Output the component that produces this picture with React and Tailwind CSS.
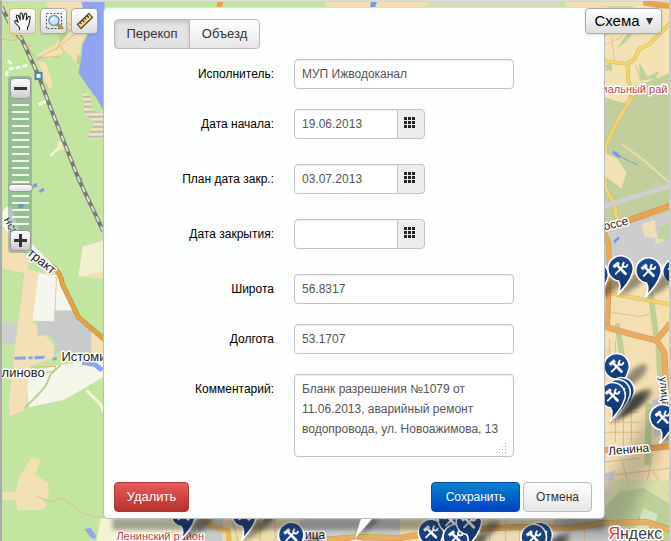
import React from "react";

const PINS = [
  [596, 274],
  [676, 271],
  [621, 268],
  [649, 270],
  [617, 366],
  [622, 390],
  [618, 392],
  [613, 395],
  [663, 417],
  [263, 496],
  [183, 514],
  [244, 514],
  [291, 535],
  [356, 553],
  [431, 532],
  [451, 520],
  [456, 537],
  [469, 522],
  [540, 535],
  [534, 537],
];

const TICKS = Array.from({ length: 18 }, (_, i) => i);

function Pin({ x, y }) {
  return (
    <g transform={`translate(${x} ${y}) scale(1.060)`}>
      <path d="M-2 26 L10 8 Q20 -2 27 -2 Q32 2 22 12 Q10 22 -2 26Z" fill="#222" opacity=".45" filter="url(#soft)" />
      <path
        d="M-3 25C0 20 0 15 -2 11.800A12 12 0 1 1 11 5C9 12 3 19 -3 25Z"
        fill="url(#pinFill)"
        stroke="#fff"
        strokeWidth="1.500"
      />
      <g stroke="#fff" fill="none">
        <path d="M-4.500 5L3 -2.500" strokeWidth="1.700" strokeLinecap="round" />
        <path d="M4.800 5L-2.500 -2.500" strokeWidth="2.600" strokeLinecap="round" />
        <path d="M-6.500 -1.500L-1.500 -5.500" strokeWidth="3" />
        <path d="M3.500 -6Q0.500 -2 3.500 -1.500Q6.500 -1 6.500 -4" strokeWidth="1.800" />
      </g>
    </g>
  );
}

function Road({ d, w = 3, color = "#f3d66b", edge = "#d9b465" }) {
  return (
    <g fill="none" strokeLinejoin="round">
      <path d={d} stroke={edge} strokeWidth={w + 1} />
      <path d={d} stroke={color} strokeWidth={w} />
    </g>
  );
}

function MapCanvas() {
  const halo = { paintOrder: "stroke", stroke: "#fff", strokeWidth: 3, strokeLinejoin: "round" };
  return (
    <svg
      className="absolute inset-0 h-full w-full"
      viewBox="0 0 671 541"
      preserveAspectRatio="xMidYMid slice"
      fontFamily="'Liberation Sans', Arial, sans-serif"
      aria-label="Карта"
    >
      <defs>
        <linearGradient id="pinFill" x1="0" y1="0" x2="0" y2="1">
          <stop offset="0" stopColor="#1c4c92" />
          <stop offset="1" stopColor="#0d2f68" />
        </linearGradient>
        <filter id="soft" x="-30%" y="-30%" width="160%" height="160%">
          <feGaussianBlur stdDeviation="2" />
        </filter>
        <filter id="wide" x="-30%" y="-30%" width="160%" height="160%">
          <feGaussianBlur stdDeviation="7" />
        </filter>
        <pattern id="stripes" width="6" height="5" patternUnits="userSpaceOnUse">
          <rect width="6" height="5" fill="#f3e3ba" />
          <rect width="6" height="2" fill="#b9bcb4" />
        </pattern>
      </defs>

      <rect width="671" height="541" fill="#c2e59f" />

      {/* north-west settlement and reservoir */}
      <path d="M46 1H82L86 14L88 27L80 46L78 66L66 50L50 58L36 55L42 50L54 44L64 34L60 16L48 10Z" fill="#f3e1b3" />
      <path d="M62 18L70 30L60 42L56 30ZM77 52L82 58L80 66L76 62ZM76 12L80 20L74 22Z" fill="#bcd78f" />
      <g stroke="#e3b78a" fill="none" strokeWidth="1">
        <path d="M2 38Q14 42 20 36L36 58L60 45L78 30M36 58Q50 55 60 56M56 49L66 28L76 32M60 45L64 52M38 58L48 90M66 22L76 26M15 36Q24 42 32 46" />
      </g>
      <path d="M38 60L46 62L52 84L49 90L42 74Z" fill="#f3e1b3" />
      <path d="M81 1H104V112L97 99L86 84L78 72L81 56L82 44L88 32L84 14Z" fill="#8fa4f2" />
      <path d="M82 90L90 96L92 110L103 113V138H86L94 122L84 112Z" fill="url(#stripes)" />
      <g fill="none" stroke="#f7fbe9" strokeWidth="3">
        <path d="M6 75Q5 67 16 67L28 64" strokeDasharray="5 2" />
        <path d="M7 60L11 63M38 104L46 100" />
        <path d="M50 155L56 149L66 145" strokeWidth="2" />
      </g>
      <path d="M57 141H66L65 148L56 151Z" fill="#f3e9bd" />
      <path d="M32 184l4-2 1 4-4 1ZM38 190l5-3 1 3-4 2ZM17 204l5-2 2 4-5 2ZM76 179l4-3 2 3-3 3Z" fill="#7a9be0" />
      <path d="M2 212Q4 205 10 206L18 228L34 246L52 264L60 268L54 273L34 258L12 238L2 226Z" fill="#f8f8ef" />

      {/* western fields */}
      <path d="M2 227L16 243L28 258L27 268L38 272L62 275V283L2 276Z" fill="#f7dfb3" />
      <path d="M2 268L25 273L22 292L2 284Z" fill="#c2e59f" />
      <path d="M82 246L103 240V270L104 278L78 276Z" fill="#f0f1cf" />
      <path d="M24 272L38 273L58 275L32 321L54 345L53 358L31 365L25 410L9 416L8 405L14 350L18 320Z" fill="#f5dfb4" />
      <path d="M38 273L57 275L73 310L54 310V321L32 320Z" fill="#f5f6ee" />
      <path d="M54 277L56 277L54 320" stroke="#e8c99e" fill="none" />
      <path d="M80 276L104 270V278Z" fill="#f5dfb4" />
      <path d="M2 322H17L14 344H2Z" fill="#cdcfcf" />
      <path d="M54 310H72L79 318L91 327V352L54 353L55 342L49 335H37V321H54Z" fill="#c9cbcb" />
      <path d="M91 330L104 340V362L91 355Z" fill="#f5dfb4" />
      <path d="M28 372L58 365L104 358V378L62 400L28 407L27 390Z" fill="#f4f7ea" />
      <path d="M104 376L60 402L26 412L2 418V440H104Z" fill="#c2e59f" />
      <path d="M9 400L26 400L24 408L10 415Z" fill="#f5dfb4" />
      <path d="M14 358L44 357M52 359L56 358" stroke="#86a2e8" strokeWidth="3" fill="none" strokeDasharray="11 3 4 2" />
      <path d="M82 362L94 364L102 370" stroke="#8fa4f2" strokeWidth="5" fill="none" />
      <path d="M60 365L50 374L45 386L36 396L24 408" stroke="#b5d397" strokeWidth="2" fill="none" />
      <path d="M86 390L100 404L104 412" stroke="#f6f5d7" strokeWidth="3" fill="none" />
      <path d="M30 367L55 366L54 371L30 374" stroke="#e2b77c" fill="none" />
      <path d="M31 457L40 459L35 474L48 484L48 498L42 499L46 506L41 510H17L15 500H2V492H15L18 478Z" fill="#f3e1b3" />
      <path d="M36 496L50 502L62 498L75 508Q88 518 104 517" stroke="#d7cd91" strokeWidth="1.500" fill="none" />
      <Road d="M50 265Q60 270 62 284L78 317L104 339" w={4} color="#e2a340" edge="#bd8a3c" />

      <path d="M1 6L12 28L21 38L38 75L50 107L63 140L78 178L103 231" stroke="#777b71" strokeWidth="4" fill="none" />
      <path d="M1 6L12 28L21 38L38 75L50 107L63 140L78 178L103 231" stroke="#dfe2d8" strokeWidth="2" strokeDasharray="6 5" fill="none" />
      <rect x="35" y="72" width="6" height="6" fill="#fff" stroke="#4c7abf" strokeWidth="2" />

      {/* northern strip */}
      <path d="M325 1H430L427 7H325ZM566 1H671V7H566Z" fill="#f3dfae" />
      <path d="M430 1H560V7H430Z" fill="#d8dcc0" />
      <path d="M217 1H223L222 7H216Z" fill="#eaa14c" />
      <path d="M371 1H377L375 7H370Z" fill="#7998e8" />

      {/* eastern districts */}
      <path d="M604 1H671V110H604Z" fill="#f4e2b4" />
      <path d="M604 98L622 88L640 84L671 72V222L604 240Z" fill="#c0cf9b" />
      <path d="M630 30L618 46L625 42L640 26ZM606 64L612 62L613 70L606 70ZM640 62L648 76L660 70L656 78L640 80Z" fill="#bfd19a" />
      <path d="M604 80L626 88L632 104L616 100L604 96Z" fill="#f4e2b4" />
      <path d="M604 5H632L640 10L620 10ZM604 20L616 30L604 36Z" fill="#cbd9a5" />
      <path d="M604 45L622 36L625 22M612 36L615 60M636 64L646 90M622 104L634 94L656 84" stroke="#e9c48b" fill="none" />
      <path d="M644 1Q655 4 671 5" stroke="#eba34c" strokeWidth="6" fill="none" />
      <Road d="M671 22L650 43L640 48L635 58L628 63L604 60" />
      <Road d="M628 63L629 80L634 94L618 120L606 145V188L615 203L618 222" />
      <path d="M606 152L618 158L627 172L622 188L612 180L604 174Z" fill="#f4e2b4" />
      <path d="M613 150l5 2 4 4-3 1-6-4Z" fill="#7798e6" />
      <path d="M618 155L638 164" stroke="#7798e6" fill="none" />
      <path d="M622 143L645 160L671 183" stroke="#eadcae" strokeWidth="2" fill="none" />
      <path d="M604 206L671 185" stroke="#cdd0cc" strokeWidth="5" fill="none" />
      <path d="M604 231L671 211V275H604Z" fill="#cccdcc" />
      <path d="M642 224L655 219L658 238L645 236ZM655 244L662 224L668 226L665 240Z" fill="#eee0b5" />
      <path d="M660 226L671 222V240L658 238Z" fill="#bdd3a0" />
      <path d="M614 240l5-4 1 2-5 5Z" fill="#6d93e0" />
      <path d="M604 272L671 262V480H604Z" fill="#f3dfb0" />
      <path d="M648 290L654 292L660 338H654ZM615 324L620 322L626 358L619 352ZM656 345L664 352V380H658ZM646 403H652V465H645Z" fill="#bcd095" />
      <path d="M606 350H612M606 358H612M606 366H612M610 338V370M616 340V370M612 312L640 316L650 314" stroke="#e6bd86" fill="none" />
      <Road d="M612 293L671 304" />
      <Road d="M604 230L609 242L610 270L608 326" w={4} color="#ebaa55" edge="#c89350" />
      <Road d="M604 228L620 223L671 205" w={5} color="#eda150" edge="#c98e4d" />
      <Road d="M604 326L636 335L657 340L665 352L667 390M657 340L671 323" w={5} color="#edaa60" edge="#cf9655" />
      <g stroke="#dfb886" fill="none" strokeWidth="1">
        <path d="M613 412H640M608 422H642M606 432H642M616 405V442M624 405V446M632 405V442M604 462L640 458M604 476L671 468M652 455L648 480M622 458L630 488M654 472L671 498" />
      </g>
      <path d="M652 400L671 396V432L655 436Z" fill="#c9c9c9" />
      <Road d="M604 450L640 449L671 446" w={5} color="#eba34c" edge="#c98e4d" />
      <path d="M604 474L616 470L610 496H604Z" fill="#c6c7c9" />
      <path d="M604 480H671V541H604Z" fill="#efdcaf" opacity=".6" />
      <path d="M604 508L620 492L644 488L671 504V541H604Z" fill="#bdd09a" />
      <path d="M644 508L658 514L654 534L636 528Z" fill="#d3e3c4" />
      <path d="M637 520h6M640 517v6M648 528h6M651 525v6" stroke="#97b293" />

      {/* southern strip */}
      <path d="M104 518H604V541H104Z" fill="#eedcaf" />
      <path d="M104 518L100 519L96 541H200V528L160 519Z" fill="#f3f3cf" />
      <path d="M84 529L90 528L96 536L94 539L89 536Z" fill="#8fa4f2" />
      <path d="M196 519H222V541H200ZM300 519H400V541H300ZM555 519H625V541H548Z" fill="#c9cacb" />
      <path d="M420 519H480L470 530H420Z" fill="#eadbb2" />
      <g stroke="#d8b98a" fill="none">
        <path d="M232 520L238 541M260 519V541M275 519V541M490 519V541M506 519V541M520 526V541M585 519V541" />
      </g>
      <Road d="M200 518L214 527L228 531L229 541" w={4} color="#edb95f" />
      <Road d="M310 541L360 537L400 538L450 530L520 527L570 528L604 523L648 522L671 530" w={5} color="#e9b05c" edge="#bf975a" />

      {/* balloon shadow */}
      <path d="M560 500L604 490L646 420L671 385V425L625 530L604 536H560Z" fill="#2c2c2c" opacity=".24" filter="url(#wide)" />

      {/* place names */}
      <g fontSize="13" fill="#222" style={halo}>
        <text x="61" y="361">Истоми</text>
        <text x="1" y="377">линово</text>
        <text transform="translate(3 219) rotate(62)" fontSize="12">нск</text>
        <text transform="translate(26 254) rotate(39)" fontSize="13">тракт</text>
        <text transform="translate(605 230) rotate(-14)" fontSize="12">оссе</text>
        <text transform="translate(609 455) rotate(-5)" fontSize="12">Ленина</text>
        <text transform="translate(660 377) rotate(84)" fontSize="11">улица</text>
        <text x="305" y="539" fontSize="12">ица</text>
      </g>
      <g fontSize="11" fill="#b04545" style={halo}>
        <text x="668" y="92" textAnchor="end">иальный рай</text>
        <text x="116" y="540">Ленинский район</text>
      </g>

      {PINS.map(([x, y], i) => (
        <Pin key={i} x={x} y={y} />
      ))}
      <path d="M112 518H608L604 530H112Z" fill="#222" opacity=".38" filter="url(#soft)" />
      <path d="M372 519L380 519L356 540Z" fill="#222" opacity=".5" filter="url(#soft)" />
      <path d="M361 518H373L354 540Z" fill="#fff" stroke="#999" strokeWidth=".6" />

      <text x="609" y="539" fontSize="16" fill="#444" style={halo}>
        <tspan fill="#e3342b">Я</tspan>ндекс
      </text>
    </svg>
  );
}

const HandIcon = () => (
  <svg width="20" height="20" viewBox="0 0 20 20" fill="#fff" stroke="#222" strokeWidth="1.100" strokeLinejoin="round" strokeLinecap="round">
    <path d="M6.500 18.500V16.500L2 11.500Q1 9.500 3 9.500L5.200 11.300L3.300 5.500Q3.500 3.500 5.300 4.500L7.200 9L7 3Q8 1 9.400 3L10 8.500L11.500 3Q13.200 1.500 13.700 3.500L13.200 9L15.500 5.500Q17.500 5 17.200 7L15.800 14L14.500 16.500V18.500" />
  </svg>
);

const MagnifierIcon = () => (
  <svg width="20" height="20" viewBox="0 0 20 20" fill="none">
    <path d="M2.500 2.500H17.500V17.500H2.500Z" stroke="#555" strokeDasharray="2 1.500" />
    <path d="M13 13L18 17" stroke="#b98c45" strokeWidth="3" strokeLinecap="round" />
    <circle cx="10" cy="9.500" r="5" fill="#c9e7fa" stroke="#6f93b8" strokeWidth="1.500" />
    <path d="M7.500 9.500Q7.500 7 10.500 7" stroke="#fff" strokeWidth="1.500" />
  </svg>
);

const RulerIcon = () => (
  <svg width="20" height="20" viewBox="0 0 20 20" fill="#f8cf84" stroke="#3d3221" strokeWidth="1.100">
    <path d="M2.500 13.500L14 2.500L17.500 6.500L6 17.500Z" />
    <path d="M5 11.200L6.500 12.800M7.300 9L9.300 11M9.600 6.800L11.100 8.400M11.900 4.600L13.900 6.600" />
  </svg>
);

const GridIcon = () => (
  <svg width="11" height="11" viewBox="0 0 11 11" fill="#222" shapeRendering="crispEdges">
    {[0, 4, 8].map((y) => [0, 4, 8].map((x) => <rect key={`${x}-${y}`} x={x} y={y} width="3" height="3" />))}
  </svg>
);

function MapButton({ label, active, children }) {
  return (
    <button
      type="button"
      aria-label={label}
      className={`flex h-[26px] w-[27px] items-center justify-center rounded-sm border bg-linear-to-b from-white to-[#dcdedd] shadow ${
        active ? "border-[#d9bd67] ring-1 ring-[#ecd891]" : "border-[#aaa]"
      }`}
    >
      {children}
    </button>
  );
}

function ZoomControl() {
  return (
    <div className="flex w-6 flex-col items-center rounded-sm bg-[#5f9080]/45 py-[2px]">
      <button
        type="button"
        aria-label="Уменьшить"
        className="flex h-[21px] w-[21px] items-center justify-center rounded-sm border border-[#999] bg-linear-to-b from-white to-[#ccc]"
      >
        <span className="h-[3px] w-[13px] bg-[#333]" />
      </button>
      <div className="relative flex flex-col gap-[5px] py-[5px]">
        {TICKS.map((t) => (
          <span key={t} className="h-[2px] w-[17px] bg-[#edf6e8]" />
        ))}
        <span className="absolute -left-1 top-[85px] h-2 w-[25px] rounded-sm border border-[#999] bg-linear-to-b from-white to-[#ddd]" />
      </div>
      <button
        type="button"
        aria-label="Увеличить"
        className="relative flex h-[21px] w-[21px] items-center justify-center rounded-sm border border-[#999] bg-linear-to-b from-white to-[#ccc]"
      >
        <span className="h-[3px] w-[13px] bg-[#333]" />
        <span className="absolute h-[13px] w-[3px] bg-[#333]" />
      </button>
    </div>
  );
}

const FIELD =
  "rounded border border-[#c4c4c4] bg-white px-[7px] text-[#555] shadow-[inset_0_1px_1px_rgba(0,0,0,0.075)] outline-none";

function Row({ id, label, children }) {
  return (
    <div className="flex items-start">
      <label htmlFor={id} className="w-[160px] text-right leading-[30px] text-black">
        {label}
      </label>
      <div className="ml-5 flex">{children}</div>
    </div>
  );
}

function TextRow({ id, label, value }) {
  return (
    <Row id={id} label={label}>
      <input id={id} type="text" defaultValue={value} className={`${FIELD} h-[30px] w-[220px]`} />
    </Row>
  );
}

function DateRow({ id, label, value }) {
  return (
    <div className="mb-[5px]">
      <Row id={id} label={label}>
        <input id={id} type="text" defaultValue={value} className={`${FIELD} h-[30px] w-[104px] rounded-r-none`} />
        <button
          type="button"
          aria-label="Выбрать дату"
          className="-ml-px flex h-[30px] w-7 items-start justify-start rounded-r border border-[#c4c4c4] bg-[#ededed] pl-[6px] pt-[7px]"
        >
          <GridIcon />
        </button>
      </Row>
    </div>
  );
}

function ObjectForm() {
  return (
    <form className="rounded-[5px] border border-[#bbb] border-t-[#ddd] bg-[#fdfefe] px-[10px] pb-[6px] pt-[11px] text-xs">
      <div className="flex text-[13px]">
        <button
          type="button"
          aria-pressed="true"
          className="h-[30px] w-[76px] rounded-l border border-[#bbb] bg-[#e3e3e3] text-[#333] shadow-[inset_0_2px_4px_rgba(0,0,0,0.15)]"
        >
          Перекоп
        </button>
        <button
          type="button"
          aria-pressed="false"
          className="-ml-px h-[30px] w-[71px] rounded-r border border-[#bbb] bg-linear-to-b from-white to-[#e6e6e6] text-[#333]"
        >
          Объезд
        </button>
      </div>
      <div className="mt-[10px] flex flex-col gap-5">
        <TextRow id="executor" label="Исполнитель:" value="МУП Ижводоканал" />
        <div className="flex flex-col gap-5">
          <DateRow id="start" label="Дата начала:" value="19.06.2013" />
          <DateRow id="plan" label="План дата закр.:" value="03.07.2013" />
          <DateRow id="close" label="Дата закрытия:" value="" />
        </div>
        <TextRow id="lat" label="Широта" value="56.8317" />
        <TextRow id="lng" label="Долгота" value="53.1707" />
        <Row id="comment" label="Комментарий:">
          <textarea
            id="comment"
            className={`${FIELD} h-[83px] w-[220px] resize-none overflow-hidden py-1 leading-5`}
            defaultValue="Бланк разрешения №1079 от 11.06.2013, аварийный ремонт водопровода, ул. Новоажимова, 13"
          />
          <svg className="-ml-[18px] mb-1 self-end" width="12" height="10" viewBox="0 0 12 10" fill="#aaa" shapeRendering="crispEdges">
            <path d="M9 0h1v1h-1zM6 3h1v1h-1zM9 3h1v1h-1zM3 6h1v1h-1zM6 6h1v1h-1zM9 6h1v1h-1zM0 9h1v1h-1zM3 9h1v1h-1zM6 9h1v1h-1zM9 9h1v1h-1z" />
          </svg>
        </Row>
      </div>
      <div className="mt-[25px] flex gap-[3px] pr-[2px]">
        <button
          type="button"
          className="mr-auto h-[30px] w-[75px] rounded border border-[#b03a35] bg-linear-to-b from-[#e9595a] to-[#b93029] text-[13px] text-white"
        >
          Удалить
        </button>
        <button
          type="submit"
          className="h-[30px] w-[89px] rounded border border-[#0a4ba8] bg-linear-to-b from-[#0a84cc] to-[#0040c8] text-white"
        >
          Сохранить
        </button>
        <button
          type="button"
          className="h-[30px] w-[69px] rounded border border-[#bbb] bg-linear-to-b from-white to-[#e6e6e6] text-[#333]"
        >
          Отмена
        </button>
      </div>
    </form>
  );
}

export default function App() {
  return (
    <main className="relative h-screen overflow-hidden border-l-2 border-r-2 border-t border-l-[#aaa] border-r-[#ccc] border-t-[#ddd] font-['Liberation_Sans',Arial,sans-serif]">
      <MapCanvas />
      <div className="absolute left-[7px] top-[7px] flex gap-1">
        <MapButton label="Перемещение карты" active>
          <HandIcon />
        </MapButton>
        <MapButton label="Увеличение области">
          <MagnifierIcon />
        </MapButton>
        <MapButton label="Линейка">
          <RulerIcon />
        </MapButton>
      </div>
      <div className="absolute left-[6px] top-[75px]">
        <ZoomControl />
      </div>
      <div className="absolute left-[101px] top-[6px] w-[502px]">
        <ObjectForm />
      </div>
      <button
        type="button"
        className="absolute right-[7px] top-[7px] flex h-[26px] w-[77px] items-center justify-center gap-[6px] rounded-sm border border-[#aaa] bg-linear-to-b from-white to-[#dcdedd] text-[15px] text-black shadow"
      >
        Схема
        <svg width="7" height="7" viewBox="0 0 7 7" fill="#333" aria-hidden="true">
          <path d="M0 0H7L3.500 7Z" />
        </svg>
      </button>
    </main>
  );
}
